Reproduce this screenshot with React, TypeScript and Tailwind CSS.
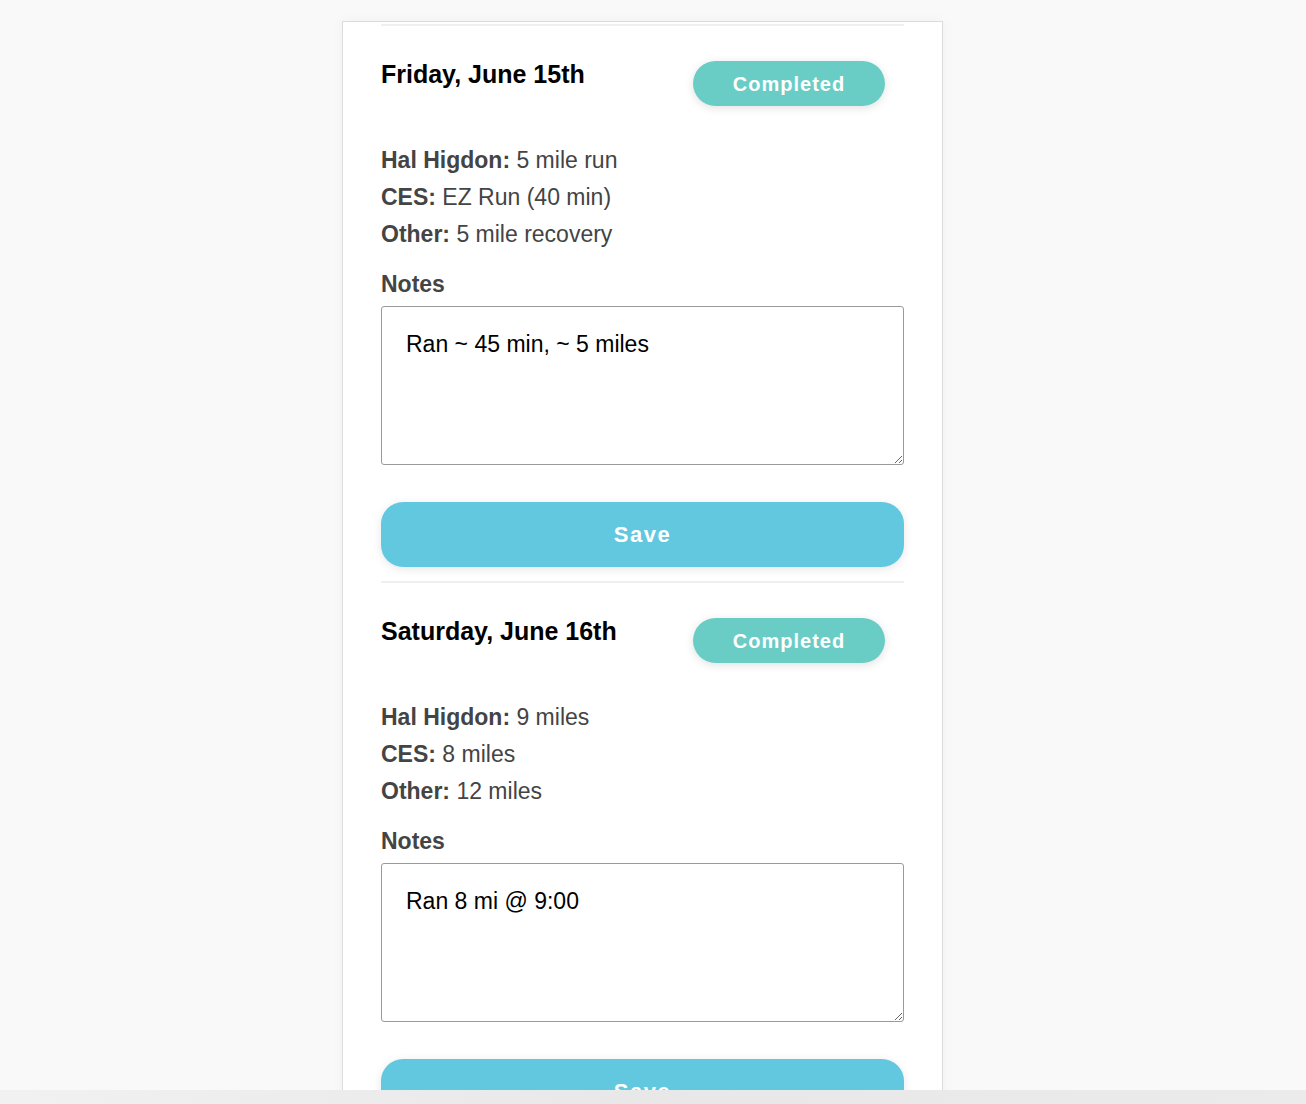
import React from 'react';

interface Day {
    title: string;
    hal: string;
    ces: string;
    other: string;
    notes: string;
}

const days: Day[] = [
    { title: 'Friday, June 15th', hal: '5 mile run', ces: 'EZ Run (40 min)', other: '5 mile recovery', notes: 'Ran ~ 45 min, ~ 5 miles' },
    { title: 'Saturday, June 16th', hal: '9 miles', ces: '8 miles', other: '12 miles', notes: 'Ran 8 mi @ 9:00' },
];

function DaySection({ day }: { day: Day }) {
    return (
        <div className="border-t-2 border-[#efefef]">
            {/* Header */}
            <div className="flex items-start justify-between pt-[35px]">
                <h2 className="mt-[-1px] text-[25px] leading-[28px] font-bold text-black">{day.title}</h2>
                <span className="mr-[19px] flex h-[45px] w-[192px] items-center justify-center rounded-full bg-[#69cdc5] text-[20px] font-bold tracking-[1px] text-white shadow-[0_2px_10px_rgba(0,0,0,0.12)]">
                    Completed
                </span>
            </div>

            {/* Plans */}
            <div className="mt-[36px] text-[23px] leading-[37px] text-[#444]">
                <p><b>Hal Higdon:</b> {day.hal}</p>
                <p><b>CES:</b> {day.ces}</p>
                <p><b>Other:</b> {day.other}</p>
            </div>

            <label className="mt-[17px] block text-[23px] leading-[28px] font-bold text-[#444]">Notes</label>
            <textarea
                defaultValue={day.notes}
                className="mt-[8px] block h-[159px] w-full rounded-[3px] border border-[#9a9a9a] px-[24px] pt-[23px] text-[23px] leading-[28px] text-black outline-none"
            />

            <button className="mt-[37px] mb-[14px] block h-[65px] w-full rounded-[22px] bg-[#62c8e0] text-[22px] font-bold tracking-[1.5px] text-white shadow-[0_2px_10px_rgba(0,0,0,0.1)]">
                Save
            </button>
        </div>
    );
}

export default function App() {
    return (
        <div className="h-[1104px] overflow-hidden bg-[#f9f9f9] font-['Liberation_Sans',Arial,sans-serif]">
            <div className="h-[1090px] overflow-hidden pt-[21px]">
                <div className="ml-[342px] min-h-[1200px] w-[601px] border border-[#dcdcdc] bg-white px-[38px] pt-[2px] shadow-[0_0_12px_rgba(0,0,0,0.04)]">
                    {days.map((d) => (
                        <DaySection key={d.title} day={d} />
                    ))}
                </div>
            </div>
            <div className="h-[14px] bg-gradient-to-r from-[#f1f1f1] via-[#e8e8e8] to-[#ebebeb]" />
        </div>
    );
}
